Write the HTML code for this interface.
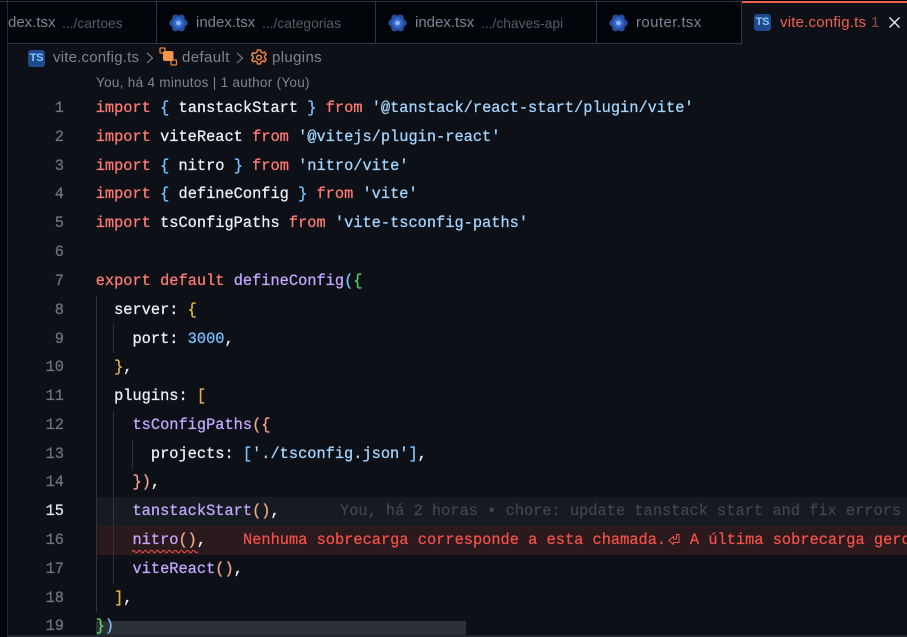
<!DOCTYPE html>
<html><head><meta charset="utf-8">
<style>
html,body{margin:0;padding:0;background:#0d1117;}
#r{position:relative;width:907px;height:637px;overflow:hidden;background:#0d1017;font-family:"Liberation Sans",sans-serif;}
.a{position:absolute;white-space:pre;}
.t{font-size:15px;line-height:20px;color:#7d8590;top:13px;}
.d{font-size:13.8px;line-height:20px;color:#565d66;top:14px;}
.l{position:absolute;left:95.7px;font-family:"Liberation Mono",monospace;font-size:15.33px;line-height:29px;height:29px;white-space:pre;color:#edf2f7;-webkit-text-stroke:.25px currentColor;}
.n{position:absolute;left:20px;width:44px;text-align:right;font-family:"Liberation Mono",monospace;font-size:15.33px;line-height:29px;color:#6e7681;-webkit-text-stroke:.2px currentColor;}
.m{font-family:"Liberation Mono",monospace;font-size:15.33px;line-height:29px;-webkit-text-stroke:.2px currentColor;}
.k{color:#ff7b72}.s{color:#a5d6ff}.f{color:#c4a8ff}.b{color:#79c0ff}.g{color:#56d364}.y{color:#e3b341}.p{color:#ffa198}.o{color:#f0a888}.c{color:#c9d1d9}
.v{position:absolute;width:1px;background:#30353b;}
</style></head><body><div id="r">
<div class="a" style="left:0;top:0;width:7px;height:637px;background:#010409"></div>
<div class="a" style="left:7px;top:0;width:1px;height:637px;background:#24282f"></div>
<div class="a" style="left:8px;top:0;width:899px;height:43px;background:#010409"></div>
<div class="a" style="left:0;top:1px;width:741px;height:1px;background:#30363d"></div>
<div class="a" style="left:8px;top:43px;width:734px;height:1px;background:#30363d"></div>
<div class="a" style="left:156px;top:2px;width:1px;height:41px;background:#30363d"></div>
<div class="a" style="left:375px;top:2px;width:1px;height:41px;background:#30363d"></div>
<div class="a" style="left:596px;top:2px;width:1px;height:41px;background:#30363d"></div>
<div class="a" style="left:741px;top:2px;width:1px;height:42px;background:#30363d"></div>
<div class="a" style="left:742px;top:2px;width:165px;height:42px;background:#0d1017"></div>
<div class="a" style="left:742px;top:1px;width:165px;height:2px;background:#f0614f"></div>

<div class="a t" style="left:8px">dex.tsx</div>
<div class="a d" style="left:62px">.../cartoes</div>

<svg class="a" style="left:169px;top:14px" width="19" height="18" viewBox="0 0 19 18"><g fill="#24509f"><ellipse cx="9.500" cy="9" rx="9.200" ry="5"/><ellipse cx="9.500" cy="9" rx="9.200" ry="5" transform="rotate(60 9.500 9)"/><ellipse cx="9.500" cy="9" rx="9.200" ry="5" transform="rotate(120 9.500 9)"/></g><circle cx="9.500" cy="9" r="5.200" fill="#3568d0"/><circle cx="9.500" cy="9" r="2.500" fill="#8fb2f2"/></svg>
<div class="a t" style="left:196px">index.tsx</div>
<div class="a d" style="left:262px">.../categorias</div>

<svg class="a" style="left:388px;top:14px" width="19" height="18" viewBox="0 0 19 18"><g fill="#24509f"><ellipse cx="9.500" cy="9" rx="9.200" ry="5"/><ellipse cx="9.500" cy="9" rx="9.200" ry="5" transform="rotate(60 9.500 9)"/><ellipse cx="9.500" cy="9" rx="9.200" ry="5" transform="rotate(120 9.500 9)"/></g><circle cx="9.500" cy="9" r="5.200" fill="#3568d0"/><circle cx="9.500" cy="9" r="2.500" fill="#8fb2f2"/></svg>
<div class="a t" style="left:415px">index.tsx</div>
<div class="a d" style="left:481px">.../chaves-api</div>

<svg class="a" style="left:609px;top:14px" width="19" height="18" viewBox="0 0 19 18"><g fill="#24509f"><ellipse cx="9.500" cy="9" rx="9.200" ry="5"/><ellipse cx="9.500" cy="9" rx="9.200" ry="5" transform="rotate(60 9.500 9)"/><ellipse cx="9.500" cy="9" rx="9.200" ry="5" transform="rotate(120 9.500 9)"/></g><circle cx="9.500" cy="9" r="5.200" fill="#3568d0"/><circle cx="9.500" cy="9" r="2.500" fill="#8fb2f2"/></svg>
<div class="a t" style="left:636px;letter-spacing:.4px">router.tsx</div>

<div class="a" style="left:754px;top:14px;width:17px;height:17px;border-radius:3px;background:#1f4a8f;color:#8ec5f7;font-size:11px;font-weight:bold;line-height:17px;text-align:center;letter-spacing:-.3px">TS</div>
<div class="a t" style="left:780px;color:#f0614f;letter-spacing:.2px">vite.config.ts</div>
<div class="a t" style="left:871px;color:#8f4a42">1</div>
<svg class="a" style="left:888px;top:16px" width="13" height="13" viewBox="0 0 13 13"><path d="M1.500 1.500L11.500 11.500M11.500 1.500L1.500 11.500" stroke="#e6edf3" stroke-width="1.400" fill="none"/></svg>

<div class="a" style="left:28px;top:50px;width:17px;height:17px;border-radius:3px;background:#1f4a8f;color:#8ec5f7;font-size:11px;font-weight:bold;line-height:17px;text-align:center;letter-spacing:-.3px">TS</div>
<div class="a t" style="left:53px;top:48px;letter-spacing:.2px">vite.config.ts</div>
<svg class="a" style="left:146px;top:52px" width="8" height="12" viewBox="0 0 8 12"><path d="M1 1L6.500 6L1 11" stroke="#7d8590" stroke-width="1.100" fill="none"/></svg>
<svg class="a" style="left:159px;top:47px" width="19" height="19" viewBox="0 0 19 19"><rect x="1" y="1" width="5" height="5" rx="1" fill="none" stroke="#e8823c" stroke-width="1.300"/><rect x="12" y="13" width="5.500" height="5" rx="1" fill="none" stroke="#e8823c" stroke-width="1.300"/><rect x="4" y="4" width="10.500" height="10" rx="2" fill="#f5954a"/></svg>
<div class="a t" style="left:182px;top:48px;letter-spacing:.4px">default</div>
<svg class="a" style="left:236px;top:52px" width="8" height="12" viewBox="0 0 8 12"><path d="M1 1L6.500 6L1 11" stroke="#7d8590" stroke-width="1.100" fill="none"/></svg>
<svg class="a" style="left:251px;top:49px" width="16" height="16" viewBox="0 0 16 16"><path d="M6.500 1h3l.5 2 1.800.9 1.900-.8 1.400 2.500-1.500 1.400v1.900l1.500 1.400-1.400 2.500-1.900-.8-1.800.9-.5 2h-3l-.5-2-1.800-.9-1.900.8L.6 10.800l1.500-1.400V7.500L.6 6.100 2 3.600l1.900.8 1.800-.9z" fill="none" stroke="#e8823c" stroke-width="1.500"/><circle cx="8" cy="8.500" r="2.300" fill="none" stroke="#e8823c" stroke-width="1.500"/></svg>
<div class="a t" style="left:272px;top:48px;letter-spacing:.35px">plugins</div>

<div class="a" style="left:96px;top:75px;font-size:13.500px;line-height:16px;color:#7d8590;letter-spacing:.3px">You, há 4 minutos | 1 author (You)</div>

<div class="a" style="left:96px;top:497px;width:811px;height:29px;background:#161b22"></div>
<div class="a" style="left:96px;top:526px;width:811px;height:29px;background:#2a1a1e"></div>
<div class="a" style="left:96px;top:621px;width:370px;height:14px;background:#2b3036"></div>
<div class="a" style="left:8px;top:635px;width:899px;height:2px;background:#21262d"></div>

<div class="v" style="left:96px;top:296px;height:316px"></div>
<div class="v" style="left:113px;top:324px;height:29px"></div>
<div class="v" style="left:113px;top:411px;height:173px"></div>
<div class="v" style="left:132px;top:440px;height:29px"></div>

<div class="n" style="top:94px">1</div><div class="l" style="top:94px"><span class="k">import</span> <span class="b">{</span> tanstackStart <span class="b">}</span> <span class="k">from</span> <span class="s">'@tanstack/react-start/plugin/vite'</span></div>
<div class="n" style="top:123px">2</div><div class="l" style="top:123px"><span class="k">import</span> viteReact <span class="k">from</span> <span class="s">'@vitejs/plugin-react'</span></div>
<div class="n" style="top:152px">3</div><div class="l" style="top:152px"><span class="k">import</span> <span class="b">{</span> nitro <span class="b">}</span> <span class="k">from</span> <span class="s">'nitro/vite'</span></div>
<div class="n" style="top:180px">4</div><div class="l" style="top:180px"><span class="k">import</span> <span class="b">{</span> defineConfig <span class="b">}</span> <span class="k">from</span> <span class="s">'vite'</span></div>
<div class="n" style="top:209px">5</div><div class="l" style="top:209px"><span class="k">import</span> tsConfigPaths <span class="k">from</span> <span class="s">'vite-tsconfig-paths'</span></div>
<div class="n" style="top:238px">6</div>
<div class="n" style="top:267px">7</div><div class="l" style="top:267px"><span class="k">export</span> <span class="k">default</span> <span class="f">defineConfig</span><span class="b">(</span><span class="g">{</span></div>
<div class="n" style="top:296px">8</div><div class="l" style="top:296px">  server: <span class="y">{</span></div>
<div class="n" style="top:325px">9</div><div class="l" style="top:325px">    port: <span class="b">3000</span>,</div>
<div class="n" style="top:353px">10</div><div class="l" style="top:353px">  <span class="y">}</span>,</div>
<div class="n" style="top:382px">11</div><div class="l" style="top:382px">  plugins: <span class="y">[</span></div>
<div class="n" style="top:411px">12</div><div class="l" style="top:411px">    <span class="f">tsConfigPaths</span><span class="o">(</span><span class="p">{</span></div>
<div class="n" style="top:440px">13</div><div class="l" style="top:440px">      projects: <span class="b">[</span><span class="s">'./tsconfig.json'</span><span class="b">]</span>,</div>
<div class="n" style="top:468px">14</div><div class="l" style="top:468px">    <span class="p">}</span><span class="o">)</span>,</div>
<div class="n" style="top:497px;color:#e6edf3">15</div><div class="l" style="top:497px">    <span class="f">tanstackStart</span><span class="o">()</span>,</div>
<div class="a m" style="left:340px;top:497px;color:#41464d">You, há 2 horas • chore: update tanstack start and fix errors</div>
<div class="n" style="top:526px">16</div><div class="l" style="top:526px">    <span class="f">nitro</span><span class="o">()</span>,</div>
<div class="a m" style="left:243px;top:526px;color:#f85149">Nenhuma sobrecarga corresponde a esta chamada.<svg width="14.600" height="12" viewBox="0 0 14.600 12" style="display:inline-block;vertical-align:-1px"><path d="M3 7.500L7.500 3.500V6H10.500V1.500H13V9.500H7.500V11.500Z" fill="none" stroke="#f85149" stroke-width="1"/></svg> A última sobrecarga gerou</div>
<svg class="a" style="left:132px;top:549px" width="66" height="5" viewBox="0 0 66 5"><path d="M0 3Q1.500 0 3 2.500T6 2.500T9 2.500T12 2.500T15 2.500T18 2.500T21 2.500T24 2.500T27 2.500T30 2.500T33 2.500T36 2.500T39 2.500T42 2.500T45 2.500T48 2.500T51 2.500T54 2.500T57 2.500T60 2.500T63 2.500T66 2.500" stroke="#f85149" stroke-width="1" fill="none"/></svg>
<div class="n" style="top:555px">17</div><div class="l" style="top:555px">    <span class="f">viteReact</span><span class="o">()</span>,</div>
<div class="n" style="top:584px">18</div><div class="l" style="top:584px">  <span class="y">]</span>,</div>
<div class="n" style="top:612px">19</div><div class="l" style="top:612px"><span class="g">}</span><span class="b">)</span></div>
</div></body></html>
